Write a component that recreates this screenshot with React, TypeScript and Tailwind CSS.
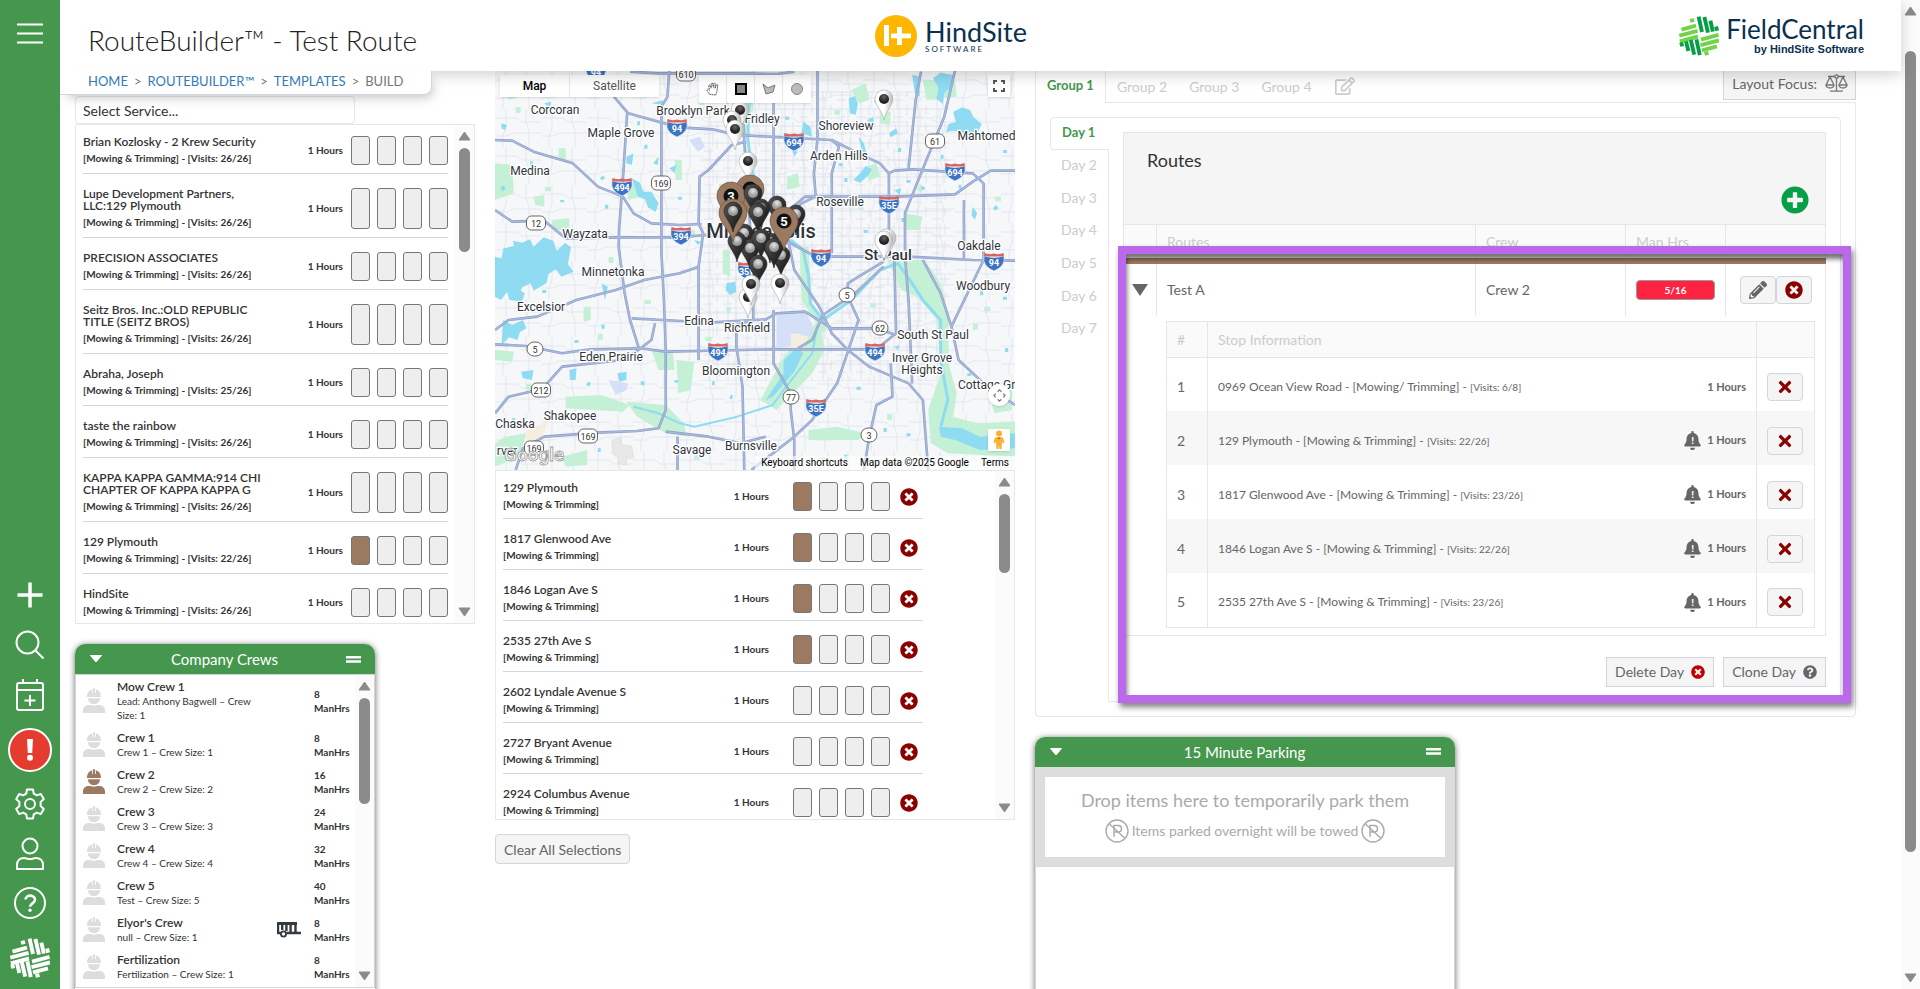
import React, { useState } from "react";
import {
  FaBell,
  FaPencilAlt,
  FaPlusCircle,
  FaQuestionCircle,
  FaRegEdit,
  FaTimes,
  FaTimesCircle,
} from "react-icons/fa";

type Service = { name: string[]; visits: string; used?: boolean };

const services: Service[] = [
  { name: ["Brian Kozlosky - 2 Krew Security"], visits: "26/26" },
  { name: ["Lupe Development Partners,", "LLC:129 Plymouth"], visits: "26/26" },
  { name: ["PRECISION ASSOCIATES"], visits: "26/26" },
  { name: ["Seitz Bros. Inc.:OLD REPUBLIC", "TITLE (SEITZ BROS)"], visits: "26/26" },
  { name: ["Abraha, Joseph"], visits: "25/26" },
  { name: ["taste the rainbow"], visits: "26/26" },
  { name: ["KAPPA KAPPA GAMMA:914 CHI", "CHAPTER OF KAPPA KAPPA G"], visits: "26/26" },
  { name: ["129 Plymouth"], visits: "22/26", used: true },
  { name: ["HindSite"], visits: "26/26" },
];

const selections = [
  { name: "129 Plymouth", used: true },
  { name: "1817 Glenwood Ave", used: true },
  { name: "1846 Logan Ave S", used: true },
  { name: "2535 27th Ave S", used: true },
  { name: "2602 Lyndale Avenue S", used: false },
  { name: "2727 Bryant Avenue", used: false },
  { name: "2924 Columbus Avenue", used: false },
];

const crews = [
  { name: "Mow Crew 1", info: "Lead: Anthony Bagwell – Crew Size: 1", hrs: 8 },
  { name: "Crew 1", info: "Crew 1 – Crew Size: 1", hrs: 8 },
  { name: "Crew 2", info: "Crew 2 – Crew Size: 2", hrs: 16, active: true },
  { name: "Crew 3", info: "Crew 3 – Crew Size: 3", hrs: 24 },
  { name: "Crew 4", info: "Crew 4 – Crew Size: 4", hrs: 32 },
  { name: "Crew 5", info: "Test – Crew Size: 5", hrs: 40 },
  { name: "Elyor's Crew", info: "null – Crew Size: 1", hrs: 8, trailer: true },
  { name: "Fertilization", info: "Fertilization – Crew Size: 1", hrs: 8 },
];

const stops = [
  { info: "0969 Ocean View Road - [Mowing/ Trimming] - ", visits: "[Visits: 6/8]", alert: false },
  { info: "129 Plymouth - [Mowing & Trimming] - ", visits: "[Visits: 22/26]", alert: true },
  { info: "1817 Glenwood Ave - [Mowing & Trimming] - ", visits: "[Visits: 23/26]", alert: true },
  { info: "1846 Logan Ave S - [Mowing & Trimming] - ", visits: "[Visits: 22/26]", alert: true },
  { info: "2535 27th Ave S - [Mowing & Trimming] - ", visits: "[Visits: 23/26]", alert: true },
];

/* ---------- small pieces ---------- */

const Weave: React.FC<{ dark: string; light: string; className?: string }> = ({ dark, light, className }) => (
  <svg viewBox="0 0 40 40" className={className} fill="none" strokeWidth="3.900">
    <g stroke={light}>
      <path d="M11 5l4-1.200M2.500 13.600L17 9.600M.3 19.600L18.600 14.800M.8 25.400L19 20.500" />
      <path d="M22 23.600L39.500 18.800M21.500 29.200L40 24.400M23 34.400L38 30.400M25.500 38l4-1.200" />
    </g>
    <g stroke={dark}>
      <path d="M19.600.6L23 16M25.400 1L29 16.600M31.400 4.600l2.400 11M37 10.400l1.200 4.400" />
      <path d="M2.200 26.400l1 4M7 25.400L9.400 35M11.800 24L15.200 38.600M17.400 23.400L20.800 39.200" />
    </g>
  </svg>
);

const Arrow: React.FC<{ down?: boolean }> = ({ down }) => (
  <svg viewBox="0 0 13 10" className="h-[10px] w-[13px] shrink-0">
    <path
      d={down ? "M1 1h11L6.5 9z" : "M1 9h11L6.5 1z"}
      fill="#8b8b8b"
      stroke="#8b8b8b"
      strokeLinejoin="round"
    />
  </svg>
);

const ScrollBar: React.FC<{ thumb: string }> = ({ thumb }) => (
  <div className="flex w-[19px] shrink-0 flex-col items-center bg-[#fbfbfb] py-[6px]">
    <Arrow />
    <div className={`w-[11px] rounded-full bg-[#8b8b8b] ${thumb}`} />
    <div className="flex-1" />
    <Arrow down />
  </div>
);

const Slots: React.FC<{ used?: boolean }> = ({ used }) => (
  <div className="flex gap-[7px] self-stretch">
    {[0, 1, 2, 3].map((i) => (
      <span
        key={i}
        className={`w-[19px] rounded-[3px] border border-[#777] ${used && i === 0 ? "bg-[#9c7a61]" : "bg-[#eee]"}`}
      />
    ))}
  </div>
);

const CrewIcon: React.FC<{ color: string }> = ({ color }) => (
  <svg viewBox="0 0 22 25" className="h-[25px] w-[22px]" fill={color}>
    <path d="M4 9C4 4.500 6.200 2 9 1.200V5h.8V.8C9.900.2 12.100.2 12.200.8V5h.8V1.200C15.800 2 18 4.500 18 9z" />
    <path d="M5 10.300h12c0 3.500-2.600 5.900-6 5.900s-6-2.400-6-5.900z" />
    <path d="M0 25v-2.500C0 19 2.500 17 6 17c1.500 0 3 .7 5 .7s3.500-.7 5-.7c3.500 0 6 2 6 5.500V25z" />
  </svg>
);

const Trailer = () => (
  <svg viewBox="0 0 24 16" className="h-4 w-6" fill="none" stroke="#333a40" strokeWidth="1.800">
    <path d="M0 1.500h20" strokeWidth="3" />
    <path d="M1 1v10h3M5.200 1v7M9.400 1v8M13.600 1v10M18.500 1v10M9.500 11h14.500" strokeWidth="2.400" />
    <circle cx="6.500" cy="12" r="2.600" />
  </svg>
);

const NoParking = () => (
  <svg viewBox="0 0 24 24" className="size-6" fill="none" stroke="#aaa" strokeWidth="1.400">
    <circle cx="12" cy="12" r="11" />
    <path d="M4.500 5l15 14M9 18V6.500h4.500c4 0 4 6.500 0 6.500H9" />
  </svg>
);

const CardHeader: React.FC<{ title: string }> = ({ title }) => (
  <div className="flex h-[30px] items-center justify-between rounded-t-[10px] bg-[#44974d] px-[14px] text-white">
    <button aria-label="Collapse">
      <svg viewBox="0 0 14 8" className="h-2 w-[14px]" fill="#fff">
        <path d="M1.500.5h11L7 7z" stroke="#fff" strokeLinejoin="round" />
      </svg>
    </button>
    <h2 className="text-[15px] leading-5">{title}</h2>
    <button aria-label="Drag">
      <svg viewBox="0 0 15 7" className="h-[7px] w-[15px]" fill="#fff">
        <path d="M0 0h15v2.500H0zM0 4.200h15v2.500H0z" />
      </svg>
    </button>
  </div>
);

/* ---------- map ---------- */

const roads = [
  "M412 340L400 540L390 680L388 740L405 880L420 960L445 1045",
  "M375 290L415 340L500 365L560 382L650 388L720 405L850 412L985 420L1060 460L1120 490L1145 520V770",
  "M530 212L525 290L508 320V760L515 900L520 1050V1230L500 1285L440 1293L330 1298L180 1310L120 1345L100 1410",
  "M42 420L90 422L150 455L260 490L330 560L400 590L430 640L480 670L560 675L620 672",
  "M42 630L90 665L180 662L240 715L390 712H560L630 705L720 712",
  "M745 425L705 435L640 510L615 530L612 670L625 700L612 800V1080",
  "M718 225L735 300L740 425L752 600L765 850V960L718 975L718 1040L735 1160L740 1410",
  "M945 212V415L935 520L940 590L900 610L865 650",
  "M865 630L910 590H1160L1330 583L1380 545L1430 512H1498",
  "M1145 520L1160 512L1210 508L1380 520L1410 550V780L1320 980",
  "M985 420L1005 440L985 520V760",
  "M822 260V770",
  "M1235 215L1220 300L1200 505",
  "M1330 212L1300 350L1250 480L1190 640V770L1200 900L1210 1150",
  "M790 700L870 730L940 770H1200L1380 780L1498 782",
  "M425 955L510 960L640 968L800 958L830 940L910 935L985 985H1110L1165 1005",
  "M42 1033L130 1038L230 1060L310 1048L450 1045L520 1055L820 1048H1110L1165 1000L1160 780L1135 740",
  "M1130 785L1060 830L1030 850V890L1060 960L1030 1055L1000 1150L930 1260L880 1310L760 1410",
  "M1130 800L1050 880L960 945L930 1020L890 1045",
  "M822 930V1090L870 1180V1230L880 1320V1410",
  "M863 720L880 810L950 920L985 1000L1030 1050L1090 1100L1200 1150L1240 1200L1255 1410",
  "M1240 780L1290 880L1320 980L1340 1080L1420 1160L1498 1215",
  "M42 990L80 960L160 950L270 900L380 870L460 840L560 820L612 800",
  "M42 1240L80 1190L140 1175L180 1160L230 1100L400 1080L450 1045L480 1020L490 970",
  "M1150 1090L1155 1190L1110 1215L1090 1310L1075 1410",
  "M520 1295L640 1310L730 1330L800 1310",
  "M420 215L500 220H720L830 222L880 215",
  "M1355 600V780",
  "M553 1310V1410",
];

const parks = [
  "M1140 780L1245 780L1290 850L1312 950L1312 1090L1335 1180L1325 1250L1390 1270L1498 1265V1370L1310 1360L1262 1330L1255 1230L1290 1120L1280 960L1225 890L1180 870z",
  "M1110 790L1040 900L950 960L965 1050L930 1120L830 1230L785 1200L845 1080L900 1000L1000 930L1090 830z",
  "M895 740L920 740L930 920L980 975L960 1000L900 900z",
  "M42 490L90 495L95 580L42 600z",
  "M410 1205L520 1215L570 1270L580 1310L520 1300L440 1250z",
  "M240 1190L340 1185L420 1215L400 1235L240 1225z",
  "M550 1080L600 1085L590 1170L555 1180z",
  "M42 1050L95 1055L90 1085L42 1080z",
  "M710 215L770 215L765 330L740 420L725 330z",
  "M42 1330L70 1310L130 1300L110 1370L42 1400z",
  "M1080 500L1110 490L1120 530L1090 540z",
  "M920 1290L1000 1280L1080 1300L1060 1320L920 1320z",
  "M290 920L310 920V960L290 965z",
  "M220 445H240V480L220 475z",
  "M200 660L250 655V690L205 690z",
  "M230 1370L300 1350V1395L240 1400z",
  "M1040 270L1080 250L1090 300L1060 310z",
  "M1240 240L1330 240L1335 290L1250 300z",
  "M860 530L890 520L895 560L860 570z",
  "M480 1050L540 1060L545 1110L500 1110z",
  "M1420 1160L1490 1170V1230L1440 1240z",
  "M70 240L110 235L140 280L80 300z",
  "M150 590L180 585V620L155 615z",
  "M410 545L440 555L450 590L415 600z",
  "M680 750L700 750L700 830L680 820z",
  "M545 480L565 480V540L548 540z",
  "M1120 330L1150 335L1148 375L1120 370z",
  "M1190 640L1240 650L1230 690L1195 690z",
];

const lakes = [
  "M42 770L60 775L66 745L95 738L92 722L118 728L140 718L150 740L178 712L205 722L215 752L238 728L255 742L246 792L262 815L228 830L212 808L192 822L186 850L150 872L142 850L118 862L108 892L84 900L76 876L58 900L42 890z",
  "M425 535L448 548L458 575L480 575L500 610L492 636L470 622L462 598L442 590z",
  "M1325 335L1350 322L1372 330L1382 352L1405 372L1392 402L1372 418L1352 398L1325 392L1305 396L1312 372L1332 366z",
  "M1268 235L1290 218L1325 225L1318 262L1300 280L1296 312L1278 296L1284 262z",
  "M1210 225L1228 228L1232 290L1218 282z",
  "M1032 295L1050 288L1058 312L1052 344L1036 340z",
  "M1045 540L1062 522L1080 498L1098 508L1086 528L1064 548z",
  "M690 850L715 845L718 875L700 885L688 870z",
  "M850 1080L890 1040L905 1060L880 1115L820 1190L800 1200L850 1120z",
  "M65 960L90 975L120 960L130 985L112 996L105 1020L82 1012L60 1035z",
  "M75 868L110 870L125 880L118 905L82 900z",
  "M385 1120L410 1115V1140L390 1145z",
  "M115 1115L150 1110L145 1140L120 1135z",
  "M250 1110L270 1105L268 1140L252 1140z",
  "M485 490L500 470L498 495z",
  "M60 370L75 375L70 390L60 385z",
  "M530 505L550 495L545 520z",
  "M410 470L430 460L425 495L410 490z",
  "M1160 570L1180 565L1175 585z",
  "M1085 360L1100 350L1105 375L1090 380z",
  "M600 720L620 725L610 735z",
  "M480 310L510 300L515 315z",
  "M180 310L200 305L195 325z",
  "M900 400L930 410L925 380L905 365z",
  "M1160 1040L1175 1035L1170 1050z",
  "M1285 1280L1350 1285L1400 1310L1498 1300V1345L1400 1350L1330 1320L1290 1310z",
  "M1145 400L1165 385L1170 400L1150 412z",
  "M1060 410L1075 430L1082 460L1070 455z",
  "M1380 620L1392 640L1385 660L1376 645z",
  "M870 440L890 455L880 470z",
  "M340 850L350 900L358 860z",
];

const cities: [string, number, number][] = [
  ["Corcoran", 60, 43], ["Brooklyn Park", 198, 44], ["Fridley", 267, 52], ["Maple Grove", 126, 66],
  ["Shoreview", 351, 59], ["Mahtomedi", 493, 69], ["Arden Hills", 344, 89], ["Medina", 35, 104],
  ["Roseville", 345, 135], ["Wayzata", 90, 167], ["Oakdale", 484, 179], ["Minnetonka", 118, 205],
  ["Woodbury", 488, 219], ["Excelsior", 46, 240], ["Edina", 204, 254], ["Richfield", 252, 261],
  ["South St Paul", 438, 268], ["Eden Prairie", 116, 290], ["Inver Grove", 427, 291], ["Heights", 427, 303],
  ["Bloomington", 241, 304], ["Cottage Grove", 501, 318], ["Shakopee", 75, 349], ["Chaska", 20, 357],
  ["rver", 12, 384], ["Savage", 197, 383], ["Burnsville", 256, 379],
];

const interstates: [string, number, number][] = [
  ["94", 101, 0], ["94", 182, 56], ["694", 299, 70], ["694", 460, 100], ["494", 127, 115], ["35E", 394, 133],
  ["394", 186, 164], ["94", 326, 186], ["94", 499, 190], ["35W", 253, 199], ["494", 223, 280],
  ["494", 380, 280], ["35E", 321, 336],
];

const highways: [string, number, number, boolean][] = [
  ["610", 191, 3, false], ["61", 440, 70, false], ["169", 166, 112, false], ["12", 41, 152, false],
  ["169", 93, 365, false], ["169", 39, 377, false], ["212", 46, 319, false], ["5", 352, 224, true],
  ["5", 40, 278, true], ["62", 385, 257, true], ["77", 296, 326, true], ["3", 374, 364, true],
];

const whitePins = [
  [245, 39], [237, 49], [240, 58], [253, 90], [392, 167], [389, 169], [389, 28],
];
const southPins = [[253, 226], [256, 213], [285, 212]];
const blackPins = [
  [282, 134], [301, 143], [266, 137], [263, 141], [249, 162], [255, 177], [275, 171], [242, 170],
  [286, 184], [266, 167], [279, 176], [263, 193],
];

const Pin: React.FC<{ x: number; y: number; dark?: boolean }> = ({ x, y, dark }) => (
  <g transform={`translate(${x} ${y})`}>
    <path
      d="M0 21C-1.500 12-9 6-9 0a9 9 0 0 1 18 0C9 6 1.500 12 0 21z"
      fill={dark ? "url(#darkPin)" : "url(#lightPin)"}
      stroke={dark ? "#222" : "#aaa"}
      strokeWidth=".6"
    />
    <circle r="5" fill={dark ? "url(#lightDot)" : "url(#darkDot)"} />
  </g>
);

const CrewPin: React.FC<{ x: number; y: number; label?: string }> = ({ x, y, label }) => (
  <g transform={`translate(${x} ${y})`}>
    <path
      d="M0 29C-2 18-14 10-14 0a14 14 0 0 1 28 0C14 10 2 18 0 29z"
      fill="#9c7a61"
      stroke="#6d5443"
      strokeWidth=".7"
    />
    {label && (
      <>
        <circle r="7.500" fill="#111" />
        <text y="4.500" textAnchor="middle" fill="#fff" fontSize="13" fontWeight="700">
          {label}
        </text>
      </>
    )}
  </g>
);

const MapDrawing = () => (
  <svg
    viewBox="0 0 520 399"
    preserveAspectRatio="xMidYMid slice"
    className="block h-full w-full font-[Roboto,sans-serif]"
    role="img"
    aria-label="Map of Minneapolis"
  >
    <defs>
      <pattern id="streets" width="46" height="38" patternUnits="userSpaceOnUse">
        <path
          d="M0 9h22l5 4h19M0 27h12l6-3h28M11 0v19l-3 8v11M31 0v13l3 9v16"
          fill="none"
          stroke="#dde3ec"
          strokeWidth=".8"
        />
      </pattern>
      <pattern id="blocks" width="19" height="17" patternUnits="userSpaceOnUse">
        <path d="M0 4h19M5 0v17M0 12h9M13 0v10" fill="none" stroke="#d9e0ea" strokeWidth=".8" />
      </pattern>
      <linearGradient id="darkPin" x2="1" y2="1">
        <stop stopColor="#555" />
        <stop offset="1" stopColor="#111" />
      </linearGradient>
      <linearGradient id="lightPin" x2="1" y2="0">
        <stop stopColor="#fff" />
        <stop offset=".5" stopColor="#fff" />
        <stop offset="1" stopColor="#bbb" />
      </linearGradient>
      <radialGradient id="darkDot" cx=".5" cy=".3">
        <stop stopColor="#666" />
        <stop offset="1" stopColor="#222" />
      </radialGradient>
      <radialGradient id="lightDot" cx=".5" cy=".3">
        <stop stopColor="#e6e6e6" />
        <stop offset="1" stopColor="#9a9a9a" />
      </radialGradient>
    </defs>
    <rect width="520" height="399" fill="#f6f7f8" />
    <rect width="520" height="399" fill="url(#streets)" />
    <rect x="205" y="20" width="250" height="290" fill="url(#blocks)" />

    <g transform="translate(-15 -71) scale(0.35714 0.33333)">
      <g fill="#c4f0d5">
        {parks.map((d) => (
          <path key={d} d={d} />
        ))}
      </g>
      <path
        d="M330 250l12 10M620 300v14M590 700h12M880 290h12M1000 330v14M1060 620h14M1230 560l10 12M1450 590v14M360 780h14M470 900v12M330 1010h14M640 1010v12M690 930h12M1380 980h14M1420 920v14M660 1120h14M1140 1250h14M960 1370v14M600 1370h14M130 1160h14M190 560v14M100 330h14M670 560h12M1460 250v14M1100 910v12"
        fill="none"
        stroke="#c4f0d5"
        strokeWidth="6"
        vectorEffect="non-scaling-stroke"
      />
      <path d="M830 945L915 938L935 985L920 1010L885 1000L870 1040L830 1045z" fill="#d5dff7" />
      <path d="M870 1000L920 1010L905 1045L870 1045z" fill="#f5ede0" />
      <path d="M585 420L615 410L630 440L610 455z" fill="#d5dff7" />
      <path d="M360 1140L415 1150L410 1170L380 1185z" fill="#d5dff7" />
      <path d="M130 1290L190 1265L170 1320L130 1335z" fill="#f5ede0" />
      <path d="M370 1320L395 1312V1335L425 1338L430 1375L410 1375V1395L388 1392L386 1372L370 1360z" fill="#e8e8e8" stroke="#ccc" />
      <g fill="#8fdcf2">
        {lakes.map((d) => (
          <path key={d} d={d} />
        ))}
      </g>
      <g fill="none" stroke="#8fdcf2" strokeLinejoin="round">
        <path
          d="M765 215L752 330L750 420L770 560L790 690L870 720L905 750L920 830L925 910L960 960L1040 900L1120 810L1170 790L1210 850L1240 900L1290 960L1290 1080L1310 1200L1290 1280"
          strokeWidth="3"
          vectorEffect="non-scaling-stroke"
        />
        <path
          d="M945 975L930 1060L850 1170L820 1215L720 1250L600 1280L560 1270L500 1240L430 1220"
          strokeWidth="2"
          vectorEffect="non-scaling-stroke"
        />
        {/* scattered ponds */}
        <path
          d="M60 560l9 9M270 700v10M340 530l6 8M460 440h9M690 300l7 9M870 265h8M1010 490v9M1180 660h9M1240 560v8M1290 470h8M1440 620l8 8M1470 890v9M340 980h9M300 1150l8 5M650 1150h7M700 1190l7 3M1130 1290h9M1200 1300v9M1020 1370h9M330 1350h8M450 1150h10M1080 690v9M90 1260h9M180 870v9M440 370h8M560 590v9M1400 880h9M1060 1160v10M1110 300v9M1170 450h9M1200 540v8M1340 560h8M1470 450v9M250 260h9M140 490h8M230 600v7M350 620h9M550 1140v8M110 820h9M270 1020v9M1470 1050h9M1370 1120v8M860 350v9M1020 540h9"
          strokeWidth="4"
          vectorEffect="non-scaling-stroke"
        />
      </g>
      <g fill="none" strokeLinejoin="round">
        {roads.map((d) => (
          <path key={d} d={d} stroke="#8c9ec8" strokeWidth="2.600" vectorEffect="non-scaling-stroke" />
        ))}
        {roads.map((d) => (
          <path key={d} d={d} stroke="#a9b9dc" strokeWidth="1.400" vectorEffect="non-scaling-stroke" />
        ))}
      </g>
    </g>

    {interstates.map(([n, x, y]) => (
      <g key={`${n}-${x}`} transform={`translate(${x} ${y})`}>
        <path d="M-10-5Q0-2 10-5Q12 5 0 10Q-12 5-10-5z" fill="#3c74c4" stroke="#fff" strokeWidth=".6" />
        <path d="M-9.500-8Q-5-6 0-7.500Q5-6 9.500-8L10-4.500H-10z" fill="#d8645f" />
        <text y="4.500" textAnchor="middle" fill="#fff" fontSize="9" fontWeight="700">
          {n}
        </text>
      </g>
    ))}
    {highways.map(([n, x, y, round]) => (
      <g key={`${n}-${x}`} transform={`translate(${x} ${y})`}>
        <rect
          x={round ? -8 : -9.5}
          y="-7"
          width={round ? 16 : 19}
          height="14"
          rx={round ? 7 : 5}
          fill="#fff"
          stroke="#555"
          strokeWidth=".9"
        />
        <text y="3.500" textAnchor="middle" fill="#333" fontSize="9">
          {n}
        </text>
      </g>
    ))}
    <g fill="#2f343a" stroke="#fff" strokeWidth="2.500" paintOrder="stroke" textAnchor="middle">
      {cities.map(([name, x, y]) => (
        <text key={name} x={x} y={y} fontSize="12">
          {name}
        </text>
      ))}
      <text x="266" y="167" fontSize="20" fontWeight="500">
        Minneapolis
      </text>
      <text x="393" y="189" fontSize="15" fontWeight="500">
        St Paul
      </text>
    </g>

    {whitePins.map(([x, y]) => (
      <Pin key={`${x}-${y}`} x={x} y={y} />
    ))}
    <CrewPin x={255} y={118} label="2" />
    <CrewPin x={236} y={125} label="3" />
    <Pin x={258} y={122} dark />
    {blackPins.map(([x, y]) => (
      <Pin key={`${x}-${y}`} x={x} y={y} dark />
    ))}
    <CrewPin x={238} y={142} />
    <Pin x={238} y={140} dark />
    <CrewPin x={289} y={150} label="5" />
    {southPins.map(([x, y]) => (
      <Pin key={`${x}-${y}`} x={x} y={y} />
    ))}

    <text x="9" y="390" fontSize="19" fontWeight="500" fill="#fff" stroke="#999" strokeWidth=".8">
      Google
    </text>
  </svg>
);

const MapPanel = () => (
  <div className="relative h-[399px] overflow-hidden text-[#333]">
    <MapDrawing />
    <div className="absolute left-[5px] top-[4px] flex h-[22px] bg-white font-[Roboto,sans-serif] text-xs shadow">
      <button className="w-[70px] border-r border-gray-200 font-medium text-black">Map</button>
      <button className="w-[89px] text-[#565656]">Satellite</button>
    </div>
    <div className="absolute left-[204px] top-[4px] flex h-7 bg-white shadow">
      <button aria-label="Pan" className="flex w-7 items-center justify-center border-r border-gray-200">
        <svg viewBox="0 0 16 16" className="size-[14px]" fill="#fff" stroke="#333" strokeDasharray="1.500 .7">
          <path d="M4 14L1 9.500 2 8l2 1.500L3 4l1.500-.5L6 7V2l1.500-.5L8.500 6l.5-4.500 1.500.3V7l1.500-4 1.500.5-1 7L11 15z" />
        </svg>
      </button>
      <button aria-label="Draw rectangle" className="flex w-7 items-center justify-center border-r border-gray-200">
        <span className="size-3 border-2 border-black bg-[#888]" />
      </button>
      <button aria-label="Draw polygon" className="flex w-7 items-center justify-center border-r border-gray-200">
        <svg viewBox="0 0 14 14" className="size-[14px]" fill="#bbb" stroke="#777">
          <path d="M1 2l5 4 7-3-2 7-7 2z" />
        </svg>
      </button>
      <button aria-label="Draw circle" className="flex w-7 items-center justify-center">
        <span className="size-3 rounded-full border border-[#888] bg-[#bbb]" />
      </button>
    </div>
    <button
      aria-label="Toggle fullscreen"
      className="absolute right-[5px] top-[4px] flex size-[22px] items-center justify-center bg-white shadow"
    >
      <svg viewBox="0 0 12 12" className="size-3" fill="none" stroke="#555" strokeWidth="2">
        <path d="M1 4V1h3M8 1h3v3M11 8v3H8M4 11H1V8" />
      </svg>
    </button>
    <button
      aria-label="Map camera controls"
      className="absolute bottom-[64px] right-[5px] flex size-[22px] items-center justify-center rounded-full bg-white shadow"
    >
      <svg viewBox="0 0 14 14" className="size-[13px]" fill="none" stroke="#777" strokeWidth="1.300">
        <path d="M5 3l2-2 2 2M5 11l2 2 2-2M3 5L1 7l2 2M11 5l2 2-2 2" />
      </svg>
    </button>
    <button
      aria-label="Street View"
      className="absolute bottom-[19px] right-[5px] flex size-[22px] items-center justify-center bg-white shadow"
    >
      <svg viewBox="0 0 12 20" className="h-5 w-3" fill="#fbb12b">
        <circle cx="6" cy="3.500" r="3" />
        <path d="M2 7.500h8l1.500 5-1.500.8L9 11.500 8.500 19h-2L6 15l-.5 4h-2L3 11.500l-1 1.800-1.500-.8z" />
        <path d="M4 7.500h4l-2 2z" fill="#d8542b" />
      </svg>
    </button>
    <div className="absolute bottom-0 right-0 flex gap-3 bg-white/60 px-1.5 font-[Roboto,sans-serif] text-[10px] leading-[14px] text-black">
      <button>Keyboard shortcuts</button>
      <span>Map data ©2025 Google</span>
      <a href="#terms">Terms</a>
    </div>
  </div>
);

/* ---------- page parts ---------- */

const SideBar = () => (
  <nav className="z-20 flex w-[60px] shrink-0 flex-col items-center justify-between bg-[#44974d] pb-[11px] pt-[22px] text-white">
    <button aria-label="Menu">
      <svg viewBox="0 0 26 22" className="h-[22px] w-[26px]" stroke="#fff" strokeWidth="2">
        <path d="M0 2.500h26M0 11.500h26M0 20.500h26" />
      </svg>
    </button>
    <div className="flex flex-col items-center [&_svg]:block">
      <button aria-label="Add" className="mb-[22px]">
        <svg viewBox="0 0 26 26" className="size-[26px]" stroke="#fff" strokeWidth="3.500">
          <path d="M.5 13h25M13 .5v25" />
        </svg>
      </button>
      <button aria-label="Search" className="mb-[18px]">
        <svg viewBox="0 0 30 30" className="size-[30px]" fill="none" stroke="#fff" strokeWidth="2">
          <circle cx="12.500" cy="12.500" r="11" />
          <path d="M20.500 20.500l8 8" />
        </svg>
      </button>
      <button aria-label="Schedule" className="mb-[17px]">
        <svg viewBox="0 0 30 33" className="h-[33px] w-[30px]" fill="none" stroke="#fff" strokeWidth="2">
          <rect x="2" y="5" width="26" height="27" rx="2" />
          <path d="M2 12h26M8 1v4M22 1v4M15 17v11M9.500 22.500h11" />
        </svg>
      </button>
      <button
        aria-label="Alerts"
        className="mb-[16px] flex size-[44px] items-center justify-center rounded-full border-2 border-white bg-[#e63b2f]"
      >
        <svg viewBox="0 0 8 22" className="h-[22px] w-2" fill="#fff">
          <path d="M1 0h6l-.8 14H1.800z" />
          <circle cx="4" cy="18.700" r="3" />
        </svg>
      </button>
      <button aria-label="Settings" className="mb-[17px]">
        <svg viewBox="0 0 32 32" className="size-8" fill="none" stroke="#fff" strokeWidth="2" strokeLinejoin="round">
          <path d="M13 1.500h6l.8 4.200 3 1.700 4-1.500 3 5.200-3.200 2.900v4l3.200 2.900-3 5.200-4-1.500-3 1.700-.8 4.200h-6l-.8-4.200-3-1.700-4 1.500-3-5.200L5.400 18v-4l-3.200-2.900 3-5.200 4 1.500 3-1.700z" />
          <circle cx="16" cy="16" r="5" />
        </svg>
      </button>
      <button aria-label="Account" className="mb-[17px]">
        <svg viewBox="0 0 30 33" className="h-[33px] w-[30px]" fill="none" stroke="#fff" strokeWidth="2" strokeLinejoin="round">
          <circle cx="15" cy="9" r="7.500" />
          <path d="M2 32v-4c0-4.500 3-7 7-7 2 0 3.500 1 6 1s4-1 6-1c4 0 7 2.500 7 7v4z" />
        </svg>
      </button>
      <button aria-label="Help" className="mb-[19px]">
        <svg viewBox="0 0 32 32" className="size-8" fill="none" stroke="#fff" strokeWidth="2">
          <circle cx="16" cy="16" r="15" />
          <path d="M11.500 12.500c.5-5.500 9.500-5 9.500.3 0 3.700-5 3.400-5 7" strokeWidth="2.600" />
          <circle cx="16" cy="23.300" r=".8" />
        </svg>
      </button>
      <a href="#home" aria-label="FieldCentral">
        <Weave dark="#fff" light="#fff" className="size-10" />
      </a>
    </div>
  </nav>
);

const TopBar = () => (
  <header className="relative z-10 flex h-[71px] shrink-0 items-center justify-between bg-white pl-7 pr-[37px] shadow-[0_4px_14px_rgba(0,0,0,0.18)]">
    <h1 className="flex-1 pt-2 text-[28px] font-light leading-8 text-[#222]">RouteBuilder™ - Test Route</h1>
    <div className="mr-[50px] flex items-center gap-2">
      <svg viewBox="0 0 42 42" className="size-[42px]">
        <circle cx="21" cy="21" r="21" fill="#ffb600" />
        <path d="M9 10h5v21H9zM16 18.500h6V12h5v6.500h9v4.700h-9V30h-5v-6.800h-6z" fill="#fff" />
      </svg>
      <div className="text-[#0b3150]">
        <div className="text-[27px] leading-[26px]">HindSite</div>
        <div className="text-[8px] leading-[8px] tracking-[2px]">SOFTWARE</div>
      </div>
    </div>
    <div className="flex flex-1 items-center justify-end gap-[7px]">
      <Weave dark="#069f45" light="#72d34b" className="size-10" />
      <div className="text-right text-[#0b3150]">
        <div className="text-[26px] leading-[27px]">FieldCentral</div>
        <div className="font-[Liberation_Sans,Arial,sans-serif] text-[11px] font-bold leading-3">
          by HindSite Software
        </div>
      </div>
    </div>
    <nav
      aria-label="Breadcrumb"
      className="absolute left-0 top-full flex h-6 items-center gap-[6px] rounded-br-lg border-b border-r border-gray-300 bg-white pb-[2px] pl-7 pr-7 text-[13px] text-[#777] shadow-[4px_6px_12px_-4px_rgba(0,0,0,0.25)]"
    >
      <a href="#home" className="text-[#337ab7]">HOME</a>
      <span>&gt;</span>
      <a href="#routebuilder" className="text-[#337ab7]">ROUTEBUILDER™</a>
      <span>&gt;</span>
      <a href="#templates" className="text-[#337ab7]">TEMPLATES</a>
      <span>&gt;</span>
      <span>BUILD</span>
    </nav>
  </header>
);

const ServiceColumn = () => (
  <section className="flex flex-col pt-[25px]">
    <select
      aria-label="Service"
      className="h-7 w-[280px] appearance-none rounded border border-gray-200 bg-white pl-[7px] text-[14px] text-[#333]"
    >
      <option>Select Service...</option>
    </select>
    <div className="flex h-[500px] border border-gray-200">
      <ul className="flex-1 overflow-hidden px-[7px]">
        {services.map((s, i) => (
          <li
            key={s.name[0]}
            className={`flex items-center border-b border-gray-300 pb-2 text-[#333] last:border-b-0 ${i === 0 ? "pt-[11px]" : "pt-[14px]"}`}
          >
            <div className="flex-1">
              {s.name.map((line) => (
                <div key={line} className="text-[12px] font-semibold leading-3">
                  {line}
                </div>
              ))}
              <div className="pt-[3px] text-[10px] font-bold leading-[14px]">
                [Mowing &amp; Trimming] - [Visits: {s.visits}]
              </div>
            </div>
            <span className="mr-2 text-[10px] font-bold">1 Hours</span>
            <Slots used={s.used} />
          </li>
        ))}
      </ul>
      <ScrollBar thumb="mt-[7px] h-[104px]" />
    </div>

    <div className="mt-5 w-[300px] rounded-t-[10px] shadow-[0_1px_6px_rgba(0,0,0,0.6)]">
      <CardHeader title="Company Crews" />
      <div className="flex h-[314px] border border-gray-300">
        <ul className="flex-1 overflow-hidden pl-[7px]">
          {crews.map((c) => (
            <li key={c.name} className="flex items-center py-1 text-[#333]">
              <CrewIcon color={c.active ? "#9c7a61" : "#ddd"} />
              <div className="ml-3 w-[140px]">
                <div className="text-[12px] font-semibold leading-[15px]">{c.name}</div>
                <div className="text-[10px] leading-[14px]">{c.info}</div>
              </div>
              <span className="w-[57px] pl-5">{c.trailer && <Trailer />}</span>
              <div className="text-[10px] font-bold leading-[14px]">
                {c.hrs}
                <br />
                ManHrs
              </div>
            </li>
          ))}
        </ul>
        <ScrollBar thumb="mt-[7px] h-[106px]" />
      </div>
      <div className="h-3 bg-white" />
    </div>
  </section>
);

const MapColumn = () => (
  <section>
    <MapPanel />
    <div className="flex h-[350px] border border-gray-200">
      <ul className="flex-1 overflow-hidden pl-[7px] pr-[72px]">
        {selections.map((s, i) => (
          <li
            key={s.name}
            className={`flex items-center border-b border-gray-300 pb-[7px] text-[#333] ${i === 0 ? "pt-[11px]" : "pt-[14px]"}`}
          >
            <div className="flex-1">
              <div className="text-[12px] font-semibold leading-3">{s.name}</div>
              <div className="pt-[3px] text-[10px] font-bold leading-[14px]">[Mowing &amp; Trimming]</div>
            </div>
            <span className="mr-6 text-[10px] font-bold">1 Hours</span>
            <Slots used={s.used} />
            <button aria-label={`Remove ${s.name}`} className="ml-[10px] mr-[5px] text-[#8b0000]">
              <FaTimesCircle className="size-[18px]" />
            </button>
          </li>
        ))}
      </ul>
      <ScrollBar thumb="mt-[7px] h-[79px]" />
    </div>
    <button className="mt-[14px] h-[30px] rounded border border-gray-300 bg-[#f5f5f5] px-2 text-[14px] text-[#666]">
      Clear All Selections
    </button>
  </section>
);

const RouteTable: React.FC = () => (
  <table className="w-full table-fixed border-collapse border border-[#e6e6e6] text-left text-[14px] text-[#666]">
    <colgroup>
      <col className="w-[33px]" />
      <col />
      <col className="w-[150px]" />
      <col className="w-[100px]" />
      <col className="w-[100px]" />
    </colgroup>
    <thead className="bg-[#fafafa] text-[#ccc]">
      <tr className="h-9">
        <th className="border border-[#e6e6e6]" />
        <th className="border border-[#e6e6e6] px-[10px] font-normal">Routes</th>
        <th className="border border-[#e6e6e6] px-[10px] font-normal">Crew</th>
        <th className="border border-[#e6e6e6] px-[10px] font-normal">Man Hrs</th>
        <th className="border border-[#e6e6e6]" />
      </tr>
    </thead>
    <tbody>
      <tr className="h-[55px] border-t-[6px] border-t-[#9c7a61]">
        <td className="border-r border-r-[#e6e6e6] pl-2">
          <button aria-label="Collapse route" className="block">
            <svg viewBox="0 0 16 12" className="h-3 w-4" fill="#666">
              <path d="M0 0h16L8 12z" />
            </svg>
          </button>
        </td>
        <td className="border-r border-r-[#e6e6e6] px-[10px]">Test A</td>
        <td className="border-r border-r-[#e6e6e6] px-[10px]">Crew 2</td>
        <td className="border-r border-r-[#e6e6e6] px-[10px]">
          <div className="h-5 rounded border border-[#999] bg-[#ff2342] text-center text-[10px] font-bold leading-[18px] text-white">
            5/16
          </div>
        </td>
        <td>
          <div className="flex justify-end pr-[13px]">
            <button
              aria-label="Edit route"
              className="flex h-7 w-9 items-center justify-center rounded border border-gray-300 bg-[#f5f5f5]"
            >
              <FaPencilAlt className="size-[18px]" />
            </button>
            <button
              aria-label="Remove route"
              className="flex h-7 w-9 items-center justify-center rounded border border-gray-300 bg-[#f5f5f5] text-[#8b0000]"
            >
              <FaTimesCircle className="size-[18px]" />
            </button>
          </div>
        </td>
      </tr>
      <tr>
        <td colSpan={5} className="pb-[7px] pl-[42px] pr-[10px] pt-[5px]">
          <table className="w-full table-fixed border-collapse border border-[#e6e6e6]">
            <colgroup>
              <col className="w-[41px]" />
              <col />
              <col className="w-[58px]" />
            </colgroup>
            <thead className="bg-[#fafafa] text-[#ccc]">
              <tr className="h-9">
                <th className="border border-[#e6e6e6] px-[10px] font-normal">#</th>
                <th className="border border-[#e6e6e6] px-[10px] font-normal">Stop Information</th>
                <th className="border border-[#e6e6e6]" />
              </tr>
            </thead>
            <tbody>
              {stops.map((s, i) => (
                <tr key={s.info} className="h-[54px] even:bg-[#f7f7f7]">
                  <td className="border-r border-r-[#e6e6e6] px-[10px] pt-1">{i + 1}</td>
                  <td className="border-r border-r-[#e6e6e6] px-[10px] pt-[5px]">
                    <div className="flex items-center gap-[6px] text-[12px]">
                      <span className="flex-1">
                        {s.info}
                        <span className="text-[10px]">{s.visits}</span>
                      </span>
                      {s.alert && (
                        <span className="relative">
                          <FaBell className="h-[19px] w-[17px]" />
                          <span className="absolute left-[7px] top-[3px] text-[10px] font-black leading-3 text-white">
                            !
                          </span>
                        </span>
                      )}
                      <span className="text-[11px] font-bold">1 Hours</span>
                    </div>
                  </td>
                  <td className="px-[10px] pt-[5px]">
                    <button
                      aria-label={`Remove stop ${i + 1}`}
                      className="flex h-7 w-9 items-center justify-center rounded border border-gray-300 bg-[#f5f5f5] text-[#8b0000]"
                    >
                      <FaTimes className="size-[18px]" />
                    </button>
                  </td>
                </tr>
              ))}
            </tbody>
          </table>
        </td>
      </tr>
    </tbody>
  </table>
);

const RouteColumn = () => {
  const [group, setGroup] = useState(1);
  const [day, setDay] = useState(1);

  return (
    <section>
      <div className="flex h-8 items-start text-[#ccc]">
        {[1, 2, 3, 4].map((g) => (
          <button
            key={g}
            onClick={() => setGroup(g)}
            className={`h-8 px-[11px] pb-[2px] ${
              g === group
                ? "relative z-[1] border-x border-gray-200 bg-white text-[13px] font-bold text-[#44974d]"
                : "text-[14px]"
            }`}
          >
            Group {g}
          </button>
        ))}
        <button aria-label="Edit groups" className="ml-3 mt-[5px]">
          <FaRegEdit className="size-5" />
        </button>
        <button className="ml-auto flex h-[29px] items-center gap-2 border border-t-0 border-gray-300 bg-[#f5f5f5] pb-1 pl-2 pr-[7px] text-[14px] text-[#666]">
          Layout Focus:
          <svg viewBox="0 0 23 18" className="h-[18px] w-[23px]" fill="none" stroke="#777" strokeWidth="1.300">
            <path d="M3 2.500h17M11.500 2.500v14.500M5 17.200h13M5 3L1 11h8zM18 3l-4 8h8zM1 11c.5 4 7.500 4 8 0M14 11c.5 4 7.500 4 8 0" />
            <circle cx="11.500" cy="2.500" r="1.700" fill="#f5f5f5" />
          </svg>
        </button>
      </div>

      <div className="relative -mt-px rounded-b border border-gray-200 p-[14px]">
        <div className="flex">
          <div className="z-[1] -mr-px grid h-[228px] w-[59px] shrink-0 grid-rows-7 text-left text-[#ccc]">
            {[1, 2, 3, 4, 5, 6, 7].map((d) => (
              <button
                key={d}
                onClick={() => setDay(d)}
                className={`pb-[2px] pl-[11px] text-left ${
                  d === day
                    ? "rounded-l border border-r-0 border-gray-200 bg-white text-[13px] font-bold text-[#44974d]"
                    : "text-[14px]"
                }`}
              >
                Day {d}
              </button>
            ))}
          </div>
          <div className="flex-1 rounded-tr border border-gray-200 p-[14px]">
            <div className="flex h-[92px] items-start justify-between border border-b-0 border-[#e6e6e6] bg-[#f5f5f5] pl-[23px] pr-4 pt-[15px]">
              <h2 className="text-[18px] leading-6 text-[#333]">Routes</h2>
              <button aria-label="Add route" className="mt-[38px] text-[#069f45]">
                <FaPlusCircle className="size-7" />
              </button>
            </div>
            <RouteTable />
            <div className="mt-[21px] flex justify-end gap-[9px] text-[14px] text-[#666]">
              <button className="flex h-[30px] items-center gap-[7px] border border-gray-300 bg-[#f5f5f5] px-2">
                Delete Day <FaTimesCircle className="size-[14px] text-[#c00000]" />
              </button>
              <button className="flex h-[30px] items-center gap-[7px] border border-gray-300 bg-[#f5f5f5] px-2">
                Clone Day <FaQuestionCircle className="size-[14px]" />
              </button>
            </div>
          </div>
        </div>
        <div className="pointer-events-none absolute bottom-[13px] left-[82px] right-[4px] top-[143px] border-8 border-[#bb68ec] shadow-[2px_4px_6px_rgba(0,0,0,0.5),inset_1px_5px_5px_rgba(0,0,0,0.55)]" />
      </div>

      <div className="mt-5 flex h-[300px] w-[420px] flex-col rounded-t-[10px] shadow-[0_1px_6px_rgba(0,0,0,0.6)]">
        <CardHeader title="15 Minute Parking" />
        <div className="h-[100px] border-[10px] border-[#ddd] bg-white pt-[11px] text-center text-[#aaa]">
          <p className="text-[18px] leading-6">Drop items here to temporarily park them</p>
          <p className="mt-[7px] flex items-center justify-center gap-[3px] text-[14px] leading-6">
            <NoParking />
            Items parked overnight will be towed
            <NoParking />
          </p>
        </div>
        <div className="flex-1 border-x border-gray-300 bg-white" />
      </div>
    </section>
  );
};

const App: React.FC = () => (
  <div className="flex h-screen overflow-hidden bg-white font-[Lato,sans-serif]">
    <SideBar />
    <div className="flex min-w-0 flex-1 flex-col">
      <TopBar />
      <main className="grid min-h-0 flex-1 grid-cols-[400fr_520fr_821fr] gap-5 overflow-hidden pl-[15px] pr-[45px]">
        <ServiceColumn />
        <MapColumn />
        <RouteColumn />
      </main>
    </div>
    <ScrollBar thumb="mt-[35px] h-[82%]" />
  </div>
);

export default App;
